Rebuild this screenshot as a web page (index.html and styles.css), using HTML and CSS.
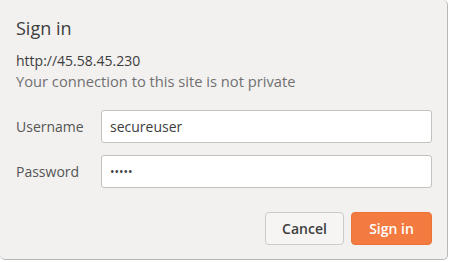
FILE: index.html
```html
<!DOCTYPE html>
<html lang="en">
<head>
    <meta charset="UTF-8">
    <title>Sign in</title>
    <link rel="stylesheet" href="styles.css">
</head>
<body>
    <div class="dialog">
        <h1 class="title">Sign in</h1>
        <p class="origin">http://45.58.45.230</p>
        <p class="notice">Your connection to this site is not private</p>

        <div class="form">
            <label class="label" for="user">Username</label>
            <input class="field" id="user" type="text" value="secureuser">
            <label class="label" for="pass">Password</label>
            <input class="field" id="pass" type="password" value="12345">
        </div>

        <div class="buttons">
            <button class="btn cancel-btn">Cancel</button>
            <button class="btn signin-btn">Sign in</button>
        </div>
    </div>
</body>
</html>
```

FILE: styles.css
```css
body {
    margin: 0;
    background-color: #ffffff;
    font-family: "Open Sans", "Noto Sans", sans-serif;
}

.dialog {
    width: 448px;
    height: 260px;
    box-sizing: border-box;
    background-color: #f2f1f0;
    border-right: 1px solid #b9b7b4;
    border-bottom: 1px solid #b9b7b4;
    border-radius: 0 5px 5px 5px;
    padding: 17px 15px 0 16px;
}

.title {
    margin: 0;
    font-size: 18px;
    font-weight: normal;
    line-height: 22px;
    color: #3d3d3d;
}

.origin,
.notice {
    margin: 0;
    font-size: 14px;
    line-height: 21px;
}

.origin {
    margin-top: 11px;
    color: #3d3d3d;
}

.notice {
    font-size: 14.7px;
    color: #707070;
}

.form {
    display: grid;
    grid-template-columns: 85px 1fr;
    row-gap: 12px;
    align-items: center;
    margin-top: 18px;
}

.label {
    font-size: 14px;
    color: #555555;
}

.field {
    height: 33px;
    box-sizing: border-box;
    border: 1px solid #c4c1bd;
    border-radius: 3px;
    background-color: #ffffff;
    padding: 0 8px;
    font-family: inherit;
    font-size: 14px;
    color: #3d3d3d;
}

#pass {
    font-size: 12px;
    letter-spacing: 0;
}

.buttons {
    display: flex;
    justify-content: flex-end;
    gap: 7px;
    margin-top: 24px;
}

.btn {
    height: 33px;
    border-radius: 4px;
    font-family: inherit;
    font-size: 14px;
    font-weight: 600;
    cursor: pointer;
}

.cancel-btn {
    width: 79px;
    background-color: #f6f5f4;
    border: 1px solid #cfcac5;
    color: #3d3d3d;
}

.signin-btn {
    width: 81px;
    background-color: #f37b40;
    border: 1px solid #ee7236;
    color: #ffffff;
}
```
